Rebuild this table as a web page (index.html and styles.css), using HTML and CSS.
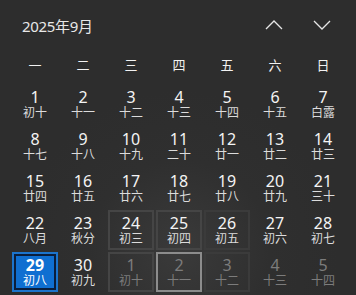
FILE: index.html
```html
<!DOCTYPE html>
<html lang="zh-CN">
<head>
<meta charset="utf-8">
<link rel="stylesheet" href="styles.css">
</head>
<body>
<div class="cal">
  <div class="head">
    <div class="title">2025年9月</div>
    <div class="navs">
      <span class="nav"><svg width="18" height="10" viewBox="0 0 18 10"><path d="M1 9 L9 1 L17 9" fill="none" stroke="#e6e6e6" stroke-width="1.3"/></svg></span>
      <span class="nav"><svg width="18" height="10" viewBox="0 0 18 10"><path d="M1 1 L9 9 L17 1" fill="none" stroke="#e6e6e6" stroke-width="1.3"/></svg></span>
    </div>
  </div>
  <div class="grid week">
    <span>一</span><span>二</span><span>三</span><span>四</span><span>五</span><span>六</span><span>日</span>
  </div>
  <div class="grid days">
    <div class="d"><b>1</b><i>初十</i></div>
    <div class="d"><b>2</b><i>十一</i></div>
    <div class="d"><b>3</b><i>十二</i></div>
    <div class="d"><b>4</b><i>十三</i></div>
    <div class="d"><b>5</b><i>十四</i></div>
    <div class="d"><b>6</b><i>十五</i></div>
    <div class="d"><b>7</b><i>白露</i></div>
    <div class="d"><b>8</b><i>十七</i></div>
    <div class="d"><b>9</b><i>十八</i></div>
    <div class="d"><b>10</b><i>十九</i></div>
    <div class="d"><b>11</b><i>二十</i></div>
    <div class="d"><b>12</b><i>廿一</i></div>
    <div class="d"><b>13</b><i>廿二</i></div>
    <div class="d"><b>14</b><i>廿三</i></div>
    <div class="d"><b>15</b><i>廿四</i></div>
    <div class="d"><b>16</b><i>廿五</i></div>
    <div class="d"><b>17</b><i>廿六</i></div>
    <div class="d"><b>18</b><i>廿七</i></div>
    <div class="d"><b>19</b><i>廿八</i></div>
    <div class="d"><b>20</b><i>廿九</i></div>
    <div class="d"><b>21</b><i>三十</i></div>
    <div class="d"><b>22</b><i>八月</i></div>
    <div class="d"><b>23</b><i>秋分</i></div>
    <div class="d rv"><b>24</b><i>初三</i></div>
    <div class="d rv"><b>25</b><i>初四</i></div>
    <div class="d rv2"><b>26</b><i>初五</i></div>
    <div class="d"><b>27</b><i>初六</i></div>
    <div class="d"><b>28</b><i>初七</i></div>
    <div class="d today"><b>29</b><i>初八</i></div>
    <div class="d"><b>30</b><i>初九</i></div>
    <div class="d out rv"><b>1</b><i>初十</i></div>
    <div class="d out hover"><b>2</b><i>十一</i></div>
    <div class="d out rv2"><b>3</b><i>十二</i></div>
    <div class="d out"><b>4</b><i>十三</i></div>
    <div class="d out"><b>5</b><i>十四</i></div>
  </div>
</div>
</body>
</html>
```
FILE: styles.css
```css
html, body {
  margin: 0;
  padding: 0;
}
body {
  width: 356px;
  height: 295px;
  overflow: hidden;
  background: #2d2d2d;
  font-family: "Noto Sans", "Noto Sans CJK SC", sans-serif;
  color: #f0f0f0;
}
.cal {
  background: radial-gradient(circle at 180px 250px, #3a3a3a 0, #2f2f2f 90px, #2d2d2d 160px);
  height: 295px;
}
.head {
  display: flex;
  align-items: center;
  justify-content: space-between;
  box-sizing: border-box;
  height: 50px;
  padding: 0 10px 0 22px;
}
.title {
  font-size: 15px;
  color: #e8e8e8;
  letter-spacing: -0.3px;
}
.navs {
  display: flex;
}
.nav {
  width: 48px;
  height: 40px;
  display: flex;
  align-items: center;
  justify-content: center;
}
.grid {
  display: grid;
  grid-template-columns: repeat(7, 46px);
  column-gap: 2px;
  padding-left: 12px;
}
.week {
  height: 28px;
  align-items: center;
  font-size: 13px;
  color: #f2f2f2;
  margin-bottom: 6px;
}
.week span {
  text-align: center;
}
.days {
  row-gap: 2px;
}
.d {
  height: 40px;
  box-sizing: border-box;
  display: flex;
  flex-direction: column;
  align-items: center;
  justify-content: center;
  border: 2px solid transparent;
}
.d b {
  font-weight: 400;
  font-size: 16px;
  line-height: 17px;
  color: #f4f4f4;
}
.d i {
  font-style: normal;
  font-size: 12px;
  line-height: 13px;
  color: #dcdcdc;
}
.d.out b, .d.out i {
  color: #7c7c7c;
}
.d.rv {
  border-color: #454545;
}
.d.rv2 {
  border-color: #3b3b3b;
}
.d.hover {
  border-color: #8c8c8c;
}
.d.today {
  border-color: #1c74cc;
  background: #0f6fd1;
  box-shadow: inset 0 0 0 2px #0a1e3c;
}
.d.today b {
  font-weight: 700;
  color: #fff;
}
.d.today i {
  color: #fff;
}
```
